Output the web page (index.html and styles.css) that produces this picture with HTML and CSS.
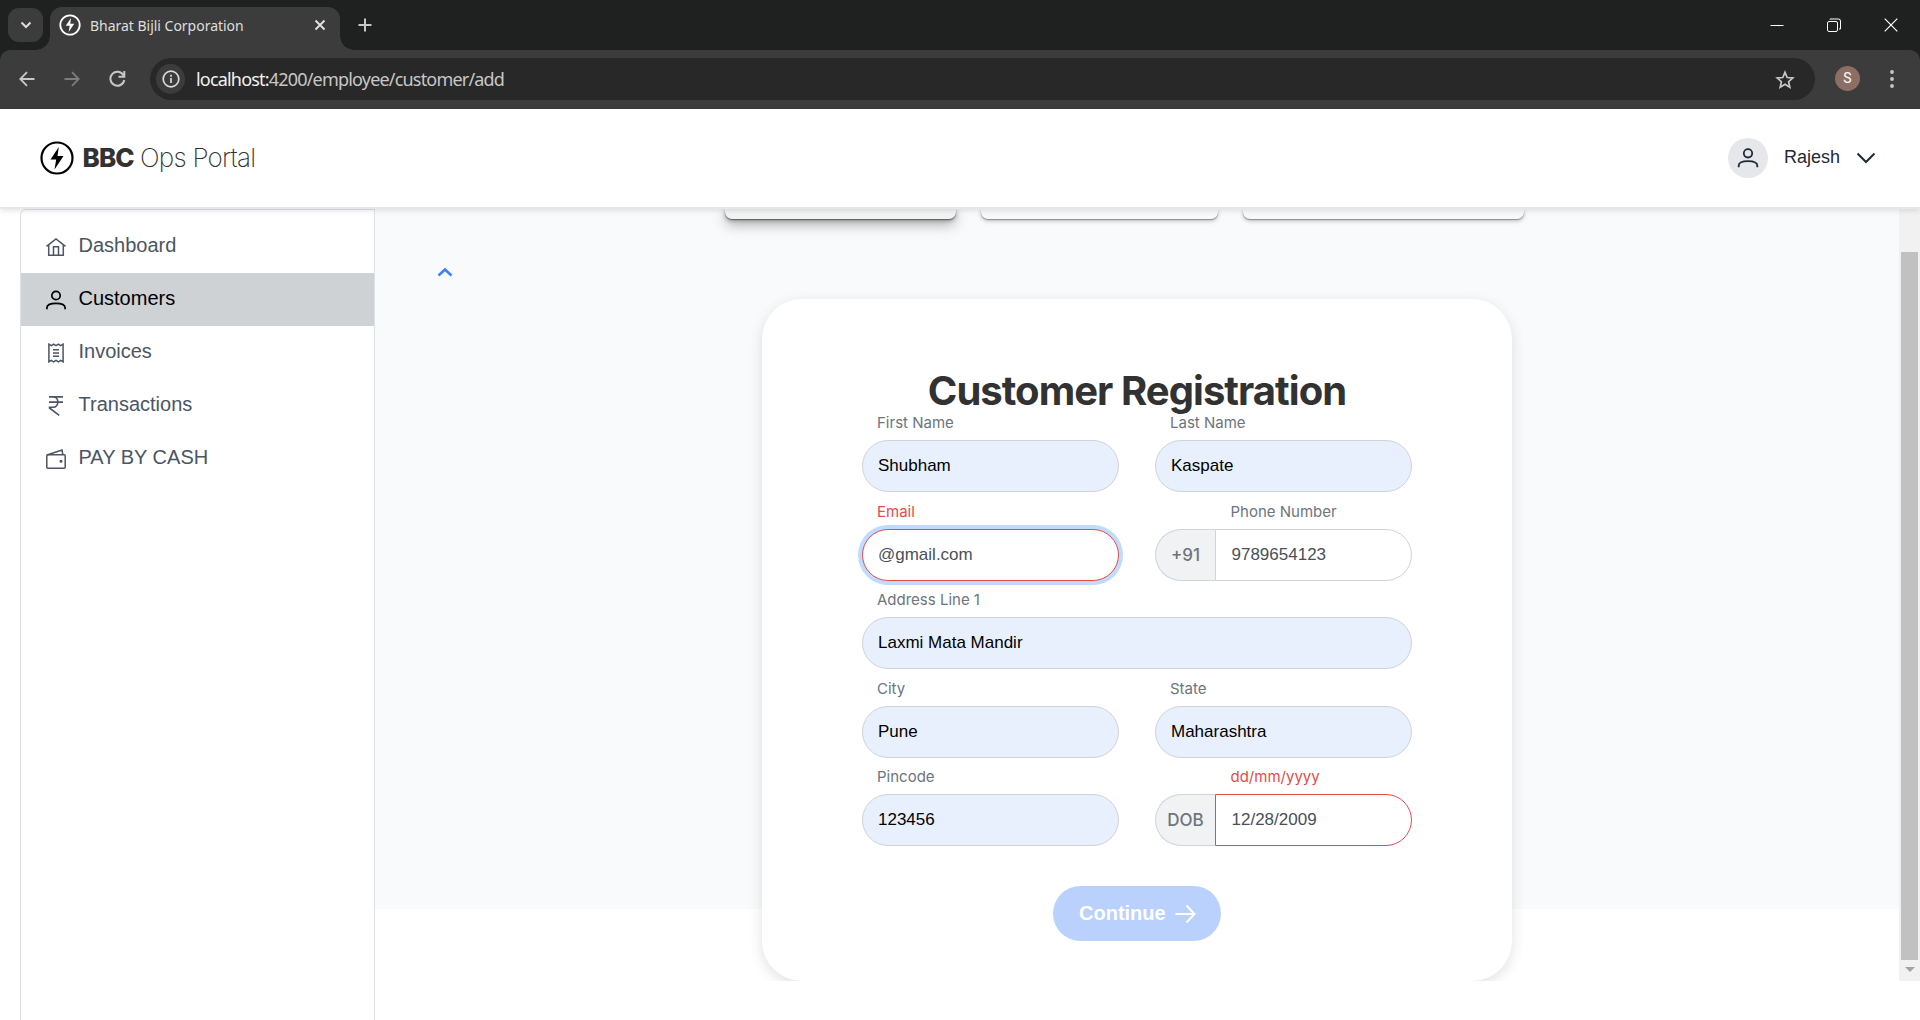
FILE: index.html
```html
<!DOCTYPE html>
<html lang="en">
<head>
<meta charset="utf-8">
<title>Bharat Bijli Corporation</title>
<link rel="stylesheet" href="styles.css">
</head>
<body>
<div class="browser">
  <div class="tabstrip">
    <div class="tab-search"><svg width="12" height="8" viewBox="0 0 12 8"><path d="M1.500 1.500 6 6l4.500-4.500" stroke="#dcdcdc" stroke-width="2" fill="none"/></svg></div>
    <div class="tab">
      <svg class="favicon" width="22" height="22" viewBox="0 0 34 34"><circle cx="17" cy="17" r="15" fill="none" stroke="#fff" stroke-width="2.800"/><path d="M18.500 6 10.500 18h6L15 28l8.500-13h-6z" fill="#fff"/></svg>
      <span class="tab-title">Bharat Bijli Corporation</span>
      <svg class="tab-close" width="12" height="12" viewBox="0 0 12 12"><path d="m1.500 1.500 9 9m0-9-9 9" stroke="#e3e3e3" stroke-width="1.900"/></svg>
    </div>
    <svg class="new-tab" width="14" height="14" viewBox="0 0 14 14"><path d="M7 .5v13M.5 7h13" stroke="#c7c7c7" stroke-width="2"/></svg>
    <div class="window-buttons">
      <svg width="14" height="14" viewBox="0 0 14 14"><path d="M.5 7.500h13" stroke="#fff"/></svg>
      <svg width="14" height="14" viewBox="0 0 14 14" fill="none" stroke="#fff"><rect x=".5" y="3.500" width="10" height="10" rx="1.500"/><path d="M3 1.500V1h8.500a2 2 0 0 1 2 2v8H12"/></svg>
      <svg width="14" height="14" viewBox="0 0 14 14"><path d="m.7.700 12.600 12.600m0-12.600L.7 13.300" stroke="#fff" stroke-width="1.200"/></svg>
    </div>
  </div>
  <div class="toolbar">
    <svg width="16" height="16" viewBox="0 0 16 16" fill="none" stroke="#c7c7c7" stroke-width="1.800"><path d="M15.500 8H1.500M8 1.200 1.300 8 8 14.800"/></svg>
    <svg width="16" height="16" viewBox="0 0 16 16" fill="none" stroke="#7c7c7c" stroke-width="1.800"><path d="M.5 8h14M8 1.200 14.700 8 8 14.800"/></svg>
    <svg width="17" height="17" viewBox="0 0 17 17" fill="none" stroke="#c7c7c7" stroke-width="2"><path d="M14.500 5.200A7 7 0 1 0 15.300 10M15.300 1v5.700H9.500"/></svg>
    <div class="omnibox">
      <span class="site-info"><svg width="18" height="18" viewBox="0 0 18 18" fill="none" stroke="#dcdcdc" stroke-width="1.700"><circle cx="9" cy="9" r="7.800"/><path d="M9 8v5M9 4.800v1.900"/></svg></span>
      <span class="url"><b>localhost:</b>4200/employee/customer/add</span>
      <svg class="star" width="20" height="19" viewBox="0 0 20 19" fill="none" stroke="#c7c7c7" stroke-width="1.700"><path d="m10 2.300 2.200 5.200 5.600.5-4.200 3.700 1.200 5.500-4.800-2.900-4.800 2.900 1.200-5.500L2.200 8l5.600-.5z"/></svg>
    </div>
    <span class="profile">S</span>
    <svg class="kebab" width="4" height="18" viewBox="0 0 4 18" fill="#c7c7c7"><circle cx="2" cy="2" r="1.900"/><circle cx="2" cy="9" r="1.900"/><circle cx="2" cy="16" r="1.900"/></svg>
  </div>
</div>

<header class="header">
  <svg width="34" height="34" viewBox="0 0 34 34"><circle cx="17" cy="17" r="15.500" fill="none" stroke="#000" stroke-width="2.200"/><path d="M18.800 6 10.500 18.500h5.700L14.500 28.500 23.500 15h-6z"/></svg>
  <h1 class="brand"><b>BBC</b> <span>Ops Portal</span></h1>
  <div class="account">
    <span class="avatar"><svg width="22" height="22" viewBox="0 0 22 22" fill="none" stroke="#1f2937" stroke-width="1.800"><circle cx="11" cy="6.300" r="4.200"/><path d="M1.700 20.200v-1.500c0-3.200 3.300-4.600 9.300-4.600s9.300 1.400 9.300 4.600v1.500"/></svg></span>
    <span class="account-name">Rajesh</span>
    <svg width="20" height="12" viewBox="0 0 20 12"><path d="m1.500 1.500 8.500 8.500 8.500-8.500" fill="none" stroke="#1f2937" stroke-width="2"/></svg>
  </div>
</header>

<div class="page">
  <nav class="sidebar">
    <a class="item"><svg width="20" height="20" viewBox="0 0 20 20" fill="none" stroke="#4b5563" stroke-width="1.500"><path d="M.5 9.300 10 2l9.500 7.300M2.700 8v10.300h14.600V8M7.500 18V9.700h5V18"/></svg><span>Dashboard</span></a>
    <a class="item active"><svg width="20" height="20" viewBox="0 0 20 20" fill="none" stroke="#000" stroke-width="1.700"><circle cx="10" cy="5.500" r="4.200"/><path d="M.9 19.300v-1.500c0-3.100 3.200-4.500 9.100-4.500s9.100 1.400 9.100 4.500v1.500"/></svg><span>Customers</span></a>
    <a class="item"><svg width="20" height="20" viewBox="0 0 20 20" fill="none" stroke="#4b5563" stroke-width="1.500"><path d="M2.900 1.200v17.600l2.400-1.500 2.300 1.500 2.400-1.500 2.400 1.500 2.300-1.500 2.400 1.500V1.200l-2.400 1.500-2.300-1.500L10 2.700 7.600 1.200 5.300 2.700zM7 6.700h6M7 10h6M7 13.300h6"/></svg><span>Invoices</span></a>
    <a class="item"><svg width="20" height="20" viewBox="0 0 20 20" fill="none" stroke="#4b5563" stroke-width="1.600"><path d="M3 .9h14M3 6.100h14M3 .9h4c6.500 0 6.500 10.400 0 10.400H3.500v.7l9.700 7.300"/></svg><span>Transactions</span></a>
    <a class="item"><svg width="20" height="20" viewBox="0 0 20 20" fill="none" stroke="#4b5563" stroke-width="1.500"><rect x=".8" y="5.700" width="18.400" height="13.500" rx="1"/><path d="M1 6 16 1.100 16.800 5.500"/><circle cx="15" cy="12.300" r=".8" fill="#4b5563"/></svg><span>PAY BY CASH</span></a>
  </nav>
  <main class="main">
    <div class="steps"><span class="step current"></span><span class="step second"></span><span class="step third"></span></div>
    <div class="collapse"><svg width="16" height="10" viewBox="0 0 16 10"><path d="m1.500 8.500 6.500-6 6.500 6" fill="none" stroke="#3b82f6" stroke-width="2.600"/></svg></div>
    <form class="card">
      <h2 class="title">Customer Registration</h2>
      <div class="fields">
        <div class="field"><label>First Name</label><input class="filled" value="Shubham"></div>
        <div class="field"><label>Last Name</label><input class="filled" value="Kaspate"></div>
        <div class="field invalid"><label>Email</label><input class="focused" value="@gmail.com"></div>
        <div class="field prefixed"><label>Phone Number</label><div class="group"><span class="prefix">+91</span><input value="9789654123"></div></div>
        <div class="field wide"><label>Address Line 1</label><input class="filled" value="Laxmi Mata Mandir"></div>
        <div class="field"><label>City</label><input class="filled" value="Pune"></div>
        <div class="field"><label>State</label><input class="filled" value="Maharashtra"></div>
        <div class="field"><label>Pincode</label><input class="filled" value="123456"></div>
        <div class="field prefixed invalid"><label>dd/mm/yyyy</label><div class="group"><span class="prefix">DOB</span><input value="12/28/2009"></div></div>
      </div>
      <button class="continue" type="button">Continue<svg width="21" height="20" viewBox="0 0 21 20"><path d="M.5 10H19M11.500 1.500 19.500 10l-8 8.500" fill="none" stroke="#fff" stroke-width="2"/></svg></button>
    </form>
  </main>
  <div class="scrollbar"><span class="thumb"></span><span class="arrow"></span></div>
</div>
</body>
</html>
```
FILE: styles.css
```css
* { box-sizing: border-box; }
body { margin: 0; height: 1020px; overflow: hidden; display: flex; flex-direction: column; background: #fff; font-family: "Liberation Sans", Arial, sans-serif; }
svg { display: block; flex: none; }

.browser { background: #1f2120; font-family: "Noto Sans", sans-serif; }
.tabstrip { display: flex; align-items: center; height: 50px; }
.tab-search { width: 35px; height: 34px; margin-left: 8px; border-radius: 11px; background: #3c3c3c; display: flex; align-items: center; justify-content: center; }
.tab { position: relative; align-self: flex-end; display: flex; align-items: center; width: 290px; height: 43px; margin-left: 7px; padding: 0 14px 8px 9px; border-radius: 12px 12px 0 0; background: #3c3c3c; }
.tab::before, .tab::after { content: ""; position: absolute; bottom: 0; width: 14px; height: 14px; }
.tab::before { right: 100%; background: radial-gradient(circle at 0 0, transparent 13.5px, #3c3c3c 14px); }
.tab::after { left: 100%; background: radial-gradient(circle at 100% 0, transparent 13.5px, #3c3c3c 14px); }
.tab-title { margin: 1px 0 0 9px; color: #dfdfdf; font-size: 14px; letter-spacing: -.02px; white-space: nowrap; }
.tab-close { margin-left: auto; }
.new-tab { margin-left: 18px; }
.window-buttons { display: flex; gap: 43px; margin: -1px 22px 0 auto; }
.toolbar { display: flex; align-items: center; height: 59px; padding: 0 26px 2px 19px; border-radius: 10px 10px 0 0; background: #3c3c3c; }
.toolbar > svg + svg { margin-left: 29px; }
.toolbar > .kebab { margin-left: 0; }
.omnibox { display: flex; flex: 1; align-items: center; height: 42px; margin: 1px 20px 0 24px; padding: 0 20px 0 6px; border-radius: 21px; background: #282828; }
.site-info { display: flex; align-items: center; justify-content: center; width: 29px; height: 30px; border-radius: 50%; background: #3c3c3c; }
.url { margin-left: 11px; color: #c7c7c7; font-size: 18px; letter-spacing: -.81px; white-space: nowrap; }
.url b { color: #f1f1f1; font-weight: 400; }
.star { margin-left: auto; }
.profile { width: 25px; height: 25px; margin-right: 30px; border-radius: 50%; background: #8d6e63; color: #fff; font: 14px/25px Roboto, sans-serif; text-align: center; }

.header { position: relative; z-index: 2; display: flex; align-items: center; height: 100px; padding: 0 44px 1px 39.500px; border-bottom: 2px solid #e5e7eb; background: #fff; box-shadow: 0 2px 5px rgba(0,0,0,.1); }
.brand { margin: 0 0 0 9px; color: #323232; font: 26px Inter, sans-serif; letter-spacing: -1px; white-space: nowrap; }
.brand b { font-weight: 800; letter-spacing: -.900px; }
.brand span { font-weight: 200; letter-spacing: -.75px; }
.account { display: flex; align-items: center; margin-left: auto; color: #1f2937; font-size: 18px; }
.avatar { display: flex; align-items: center; justify-content: center; width: 40px; height: 40px; border-radius: 50%; background: #e5e7eb; }
.account-name { margin: 0 16px; }

.page { display: flex; flex: 1; min-height: 0; }
.sidebar { width: 355px; margin-left: 20px; padding-top: 10px; border: 1px solid #dee2e6; border-width: 1px 1px 0; border-radius: 6px 0 0; }
.item { display: flex; align-items: center; gap: 12.500px; height: 53px; padding-left: 25px; color: #4b5563; font-size: 20px; }
.item svg { margin-top: 0; }
.item span { margin-top: -2px; }
.item.active { background: #ced2d5; color: #000; }

.main { display: flex; flex-direction: column; width: 1524px; height: 772px; overflow: hidden; background: linear-gradient(#f8fafc 700px, #fff 0); }
.steps { display: flex; gap: 25px; height: 10px; padding-left: 350px; }
.step { height: 10px; border-radius: 0 0 7px 7px; background: #f8f9fa; box-shadow: 0 1px 1px rgba(0,0,0,.3), 0 2px 4px rgba(0,0,0,.25); }
.current { width: 231px; background: #f3f3f3; box-shadow: 0 1px 1px rgba(0,0,0,.4), 0 2px 4px rgba(0,0,0,.3), 0 5px 14px rgba(0,0,0,.35); }
.second { width: 237px; }
.third { width: 281px; }
.collapse { display: flex; align-items: center; height: 80px; padding: 25px 0 0 62px; }
.card { display: flex; flex-direction: column; flex: none; width: 750px; height: 682px; align-self: center; padding: 68px 100px 0; border-radius: 40px; background: #fff; box-shadow: 0 4px 14px rgba(0,0,0,.12); }
.title { margin: 0; color: #323232; font: 700 40px/48px Inter, sans-serif; letter-spacing: -.95px; text-align: center; }
.fields { display: grid; grid-template-columns: 257px 257px; column-gap: 36px; row-gap: 10.500px; margin-top: -1px; }
.wide { grid-column: 1 / 3; }
.field label { display: block; height: 26px; padding-left: 15px; color: #6c757d; font: 15px/17px Inter, sans-serif; }
.prefixed label { padding-left: 75.500px; }
.field input { display: block; width: 100%; height: 52px; padding: 0 15px; border: 1px solid #ced4da; border-radius: 26px; outline: 0; background: #fff; color: #495057; font: 17px "Liberation Sans", Arial, sans-serif; }
.field .filled { background: #e8f0fe; color: #000; }
.invalid label { color: #e24c4c; }
.field.invalid input { border-color: #e24c4c; }
.field .focused { box-shadow: 0 0 0 4px #bfdbfe; }
.group { display: flex; }
.prefix { flex: none; width: 60px; height: 52px; border: 1px solid #ced4da; border-right: 0; border-radius: 26px 0 0 26px; background: #f1f2f4; color: #6c757d; font: 500 17px/51px Inter, sans-serif; text-align: center; }
.group input { min-width: 0; border-radius: 0 26px 26px 0; }
.prefixed .group input { padding-left: 15.500px; }
.continue { display: flex; align-items: center; align-self: center; gap: 9px; width: 168px; height: 55px; margin-top: 40px; padding: 0 0 0 26px; border: 0; border-radius: 27.500px; background: #b9d1fc; color: #fff; font: 700 20px "Liberation Sans", Arial, sans-serif; }

.scrollbar { display: flex; flex-direction: column; align-items: center; width: 21px; height: 772px; padding-top: 43px; background: #f1f1f1; }
.thumb { width: 17px; height: 708px; background: #c1c1c1; }
.arrow { margin-top: 7px; border: 5px solid transparent; border-top-color: #a3a3a3; border-bottom: 0; }
```
